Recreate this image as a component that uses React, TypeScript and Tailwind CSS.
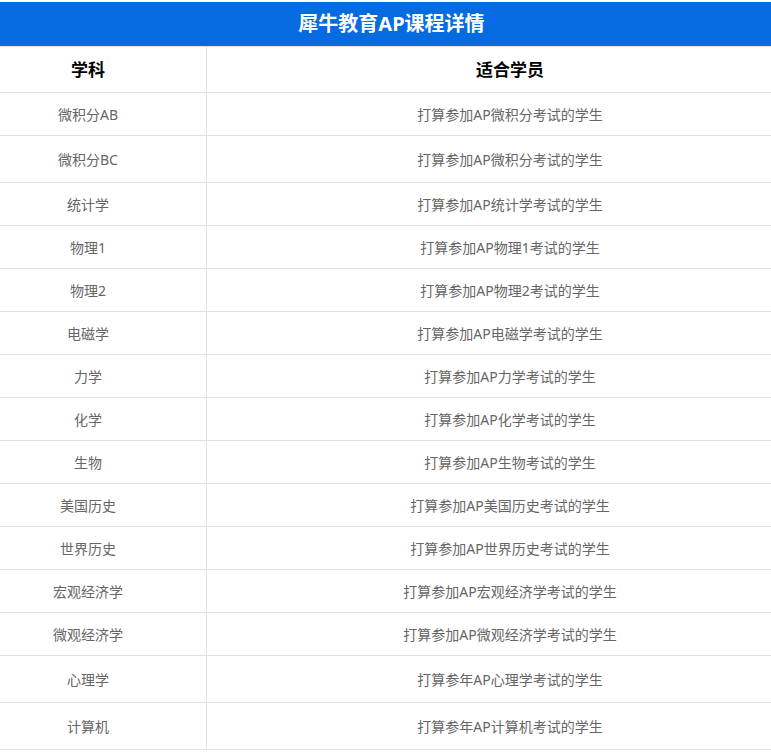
const rows: [string, string, number][] = [
  ["微积分AB", "打算参加AP微积分考试的学生", 43],
  ["微积分BC", "打算参加AP微积分考试的学生", 47],
  ["统计学", "打算参加AP统计学考试的学生", 43],
  ["物理1", "打算参加AP物理1考试的学生", 43],
  ["物理2", "打算参加AP物理2考试的学生", 43],
  ["电磁学", "打算参加AP电磁学考试的学生", 43],
  ["力学", "打算参加AP力学考试的学生", 43],
  ["化学", "打算参加AP化学考试的学生", 43],
  ["生物", "打算参加AP生物考试的学生", 43],
  ["美国历史", "打算参加AP美国历史考试的学生", 43],
  ["世界历史", "打算参加AP世界历史考试的学生", 43],
  ["宏观经济学", "打算参加AP宏观经济学考试的学生", 43],
  ["微观经济学", "打算参加AP微观经济学考试的学生", 43],
  ["心理学", "打算参年AP心理学考试的学生", 47],
  ["计算机", "打算参年AP计算机考试的学生", 47],
];

export default function App() {
  return (
    <div className="w-[771px] overflow-hidden bg-white">
      <div className="w-[843px] ml-[-30px] pt-[2px]" style={{ fontFamily: '"Noto Sans", "Noto Sans CJK SC", sans-serif' }}>
        <div className="h-[44px] bg-[#066be0] flex items-center justify-center text-white font-bold text-[20px]">犀牛教育AP课程详情</div>
        <div className="flex h-[47px] border-t border-b border-[#e2e2e2] text-[17px] font-bold text-black">
          <div className="w-[237px] border-r border-[#e2e2e2] flex items-center justify-center">学科</div>
          <div className="flex-1 flex items-center justify-center">适合学员</div>
        </div>
        {rows.map(([a, b, h], i) => (
          <div key={i} className="flex border-b border-[#e2e2e2] text-[14px] text-[#666]" style={{ height: h }}>
            <div className="w-[237px] border-r border-[#e2e2e2] flex items-center justify-center">{a}</div>
            <div className="flex-1 flex items-center justify-center">{b}</div>
          </div>
        ))}
      </div>
    </div>
  );
}
